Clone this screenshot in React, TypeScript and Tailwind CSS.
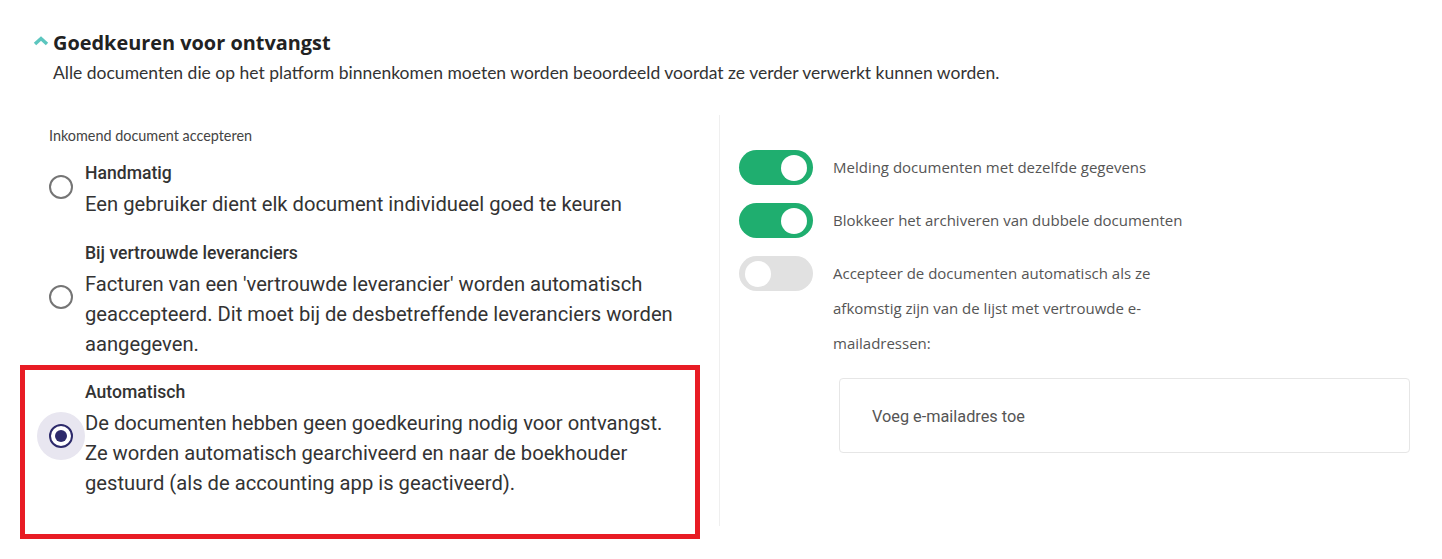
const Radio = ({ checked }: { checked?: boolean }) => (
  <div
    className={
      checked
        ? "mb-[6px] flex h-6 w-6 shrink-0 items-center justify-center rounded-full border-2 border-[#2d2a6b] shadow-[0_0_0_12px_#e8e6f0]"
        : "mb-[6px] flex h-6 w-6 shrink-0 items-center justify-center rounded-full border-2 border-[#757575]"
    }
  >
    {checked && <div className="h-3 w-3 rounded-full bg-[#2d2a6b]" />}
  </div>
);

const Option = ({
  title,
  text,
  checked,
}: {
  title: string;
  text: string;
  checked?: boolean;
}) => (
  <div className="flex items-center gap-3">
    <Radio checked={checked} />
    <div className="w-[595px] font-['Roboto',sans-serif] text-[#333]">
      <div className="text-[17.6px] font-medium leading-[24px]">{title}</div>
      <p className="mt-1 text-[20.2px] leading-[30px]">{text}</p>
    </div>
  </div>
);

const Toggle = ({ on }: { on?: boolean }) => (
  <div
    className={
      on
        ? "flex h-[35px] w-[74px] shrink-0 items-center justify-end rounded-full bg-[#1fae6f] px-[6px]"
        : "flex h-[35px] w-[74px] shrink-0 items-center justify-start rounded-full bg-[#e1e1e1] px-[6px]"
    }
  >
    <div className="h-[26px] w-[26px] rounded-full bg-white" />
  </div>
);

export default function App() {
  return (
    <div className="h-[559px] w-[1442px] bg-white">
      {/* Header */}
      <div className="pl-[33px] pt-[30px]">
        <div className="flex items-center gap-[4px]">
          <svg width="16" height="10" viewBox="0 0 16 10" className="mt-[-5px]">
            <path
              d="M2 8 L8 2.5 L14 8"
              fill="none"
              stroke="#5cc6bf"
              strokeWidth="3.5"
            />
          </svg>
          <h2 className="font-['Open_Sans',sans-serif] text-[19.9px] font-bold leading-[26px] text-[#222]">
            Goedkeuren voor ontvangst
          </h2>
        </div>
        <p className="mt-[5px] pl-[20px] font-['Lato',sans-serif] text-[17.5px] leading-[24px] text-[#333]">
          Alle documenten die op het platform binnenkomen moeten worden
          beoordeeld voordat ze verder verwerkt kunnen worden.
        </p>
      </div>

      <div className="mt-[30px] flex">
        {/* Left column */}
        <div className="ml-[20px] w-[680px] pt-[12px]">
          <div className="pl-[29px] font-['Lato',sans-serif] text-[14.4px] leading-[18px] text-[#444]">
            Inkomend document accepteren
          </div>
          <div className="mt-[16px] flex flex-col gap-[22px]">
            <div className="pl-[29px]">
              <Option
                title="Handmatig"
                text="Een gebruiker dient elk document individueel goed te keuren"
              />
            </div>
            <div className="pl-[29px]">
              <Option
                title="Bij vertrouwde leveranciers"
                text="Facturen van een 'vertrouwde leverancier' worden automatisch geaccepteerd. Dit moet bij de desbetreffende leveranciers worden aangegeven."
              />
            </div>
            <div className="-mt-[16px] border-[5px] border-[#e81c24] pb-[36px] pl-[24px] pt-[10px]">
              <Option
                checked
                title="Automatisch"
                text="De documenten hebben geen goedkeuring nodig voor ontvangst. Ze worden automatisch gearchiveerd en naar de boekhouder gestuurd (als de accounting app is geactiveerd)."
              />
            </div>
          </div>
        </div>

        {/* Divider */}
        <div className="ml-[19px] h-[411px] w-px bg-[#efefef]" />

        {/* Right column */}
        <div className="flex-1 pl-[19px] pr-[32px] pt-[35px] font-['Open_Sans',sans-serif] text-[15px] text-[#555]">
          <div className="flex flex-col gap-[18px]">
            <div className="flex items-center gap-5">
              <Toggle on />
              <span className="leading-[35px]">
                Melding documenten met dezelfde gegevens
              </span>
            </div>
            <div className="flex items-center gap-5">
              <Toggle on />
              <span className="leading-[35px]">
                Blokkeer het archiveren van dubbele documenten
              </span>
            </div>
            <div className="flex items-start gap-5">
              <Toggle />
              <p className="w-[360px] leading-[35px]">
                Accepteer de documenten automatisch als ze afkomstig zijn van
                de lijst met vertrouwde e-mailadressen:
              </p>
            </div>
          </div>
          <div className="ml-[100px] mt-[17px] flex h-[75px] items-center rounded border border-[#e6e6e6] pl-[32px] pt-[4px] font-['Roboto',sans-serif] text-[16.3px] text-[#555]">
            Voeg e-mailadres toe
          </div>
        </div>
      </div>
    </div>
  );
}
